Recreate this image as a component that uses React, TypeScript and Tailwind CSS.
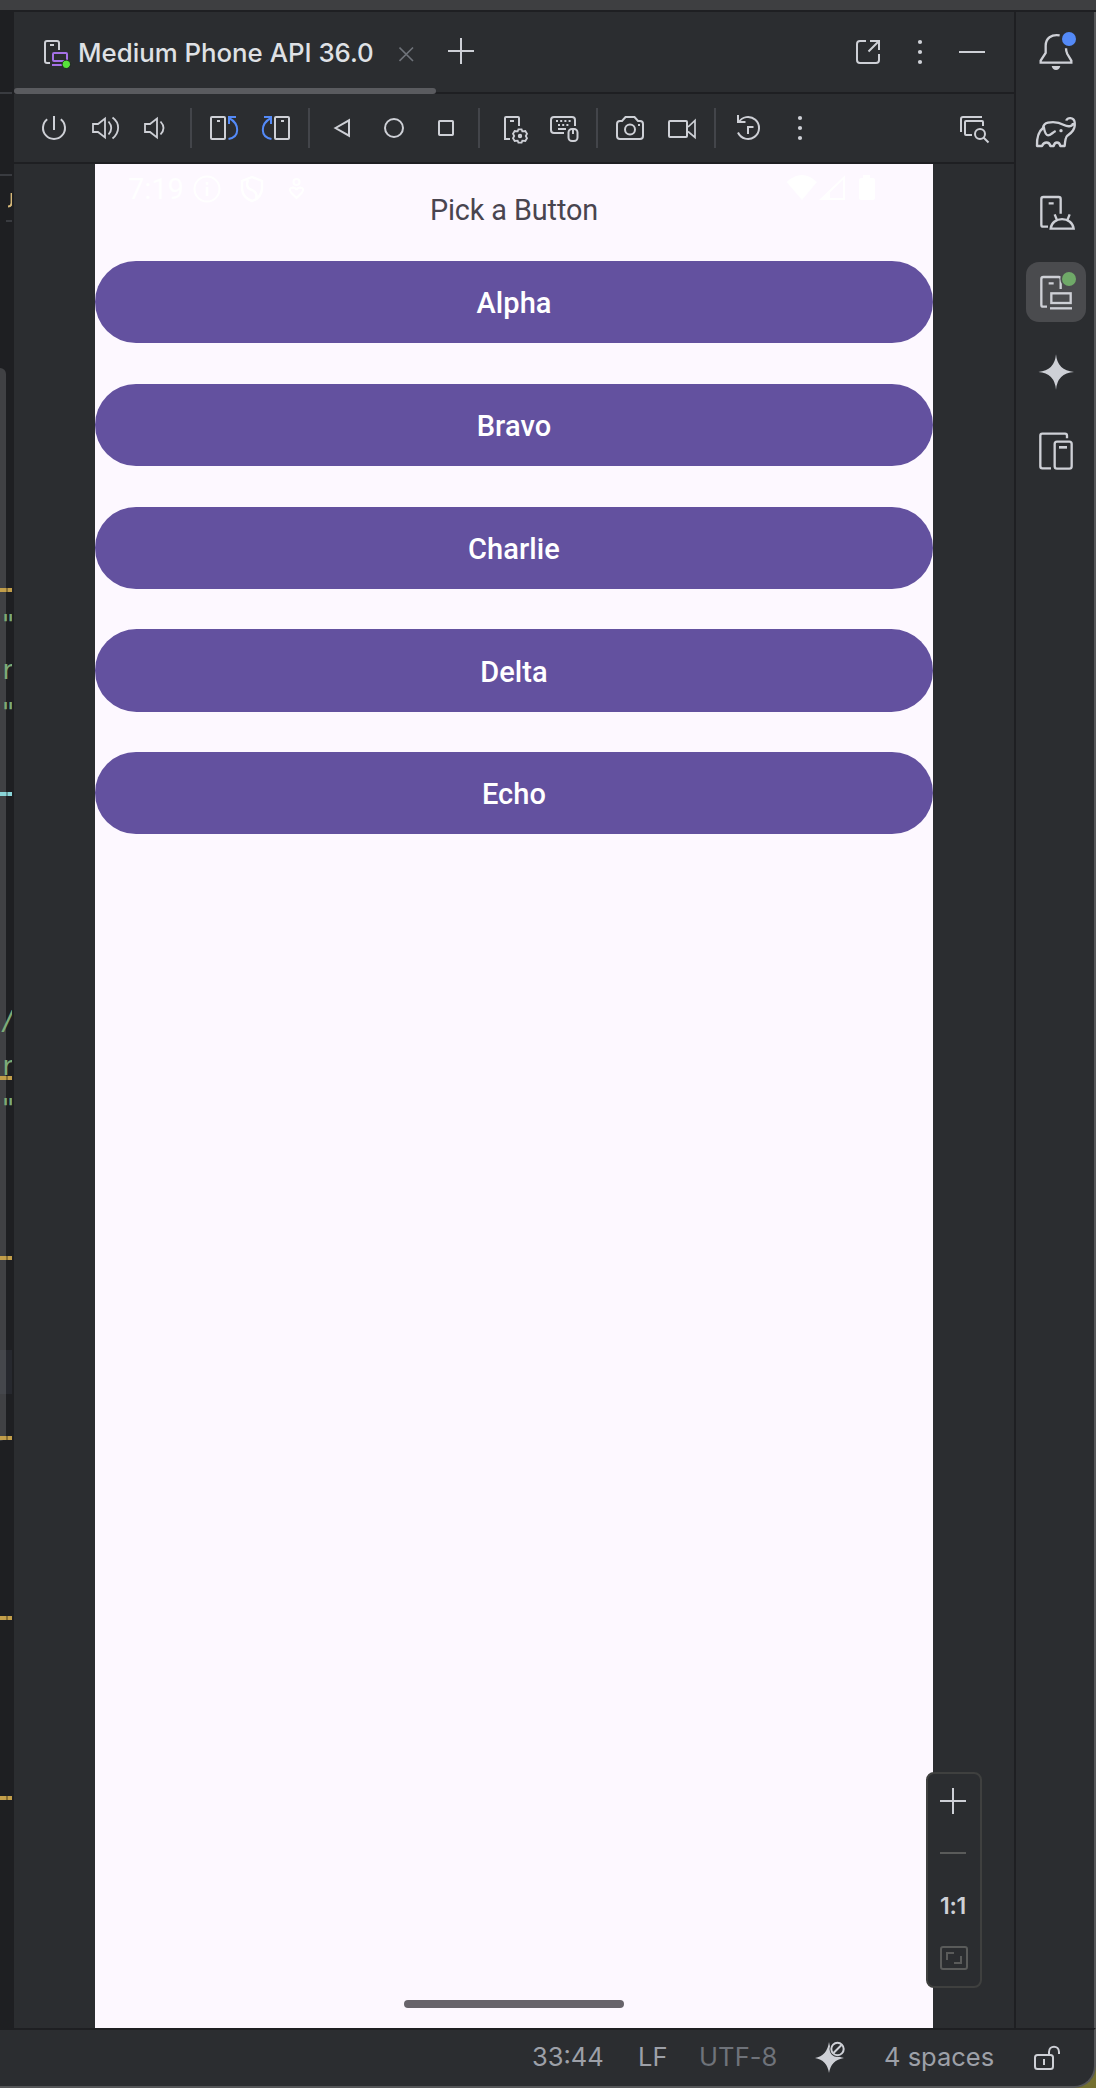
import type { ReactNode } from "react";

type ArtProps = { w: number; h: number; box: string; sw?: number; children: ReactNode };

/* Line-art cell: strokes by default, filled parts opt in individually. */
function Art({ w, h, box, sw = 2, children }: ArtProps) {
  return (
    <svg
      width={w}
      height={h}
      viewBox={box}
      fill="none"
      stroke="currentColor"
      strokeWidth={sw}
      className="block shrink-0"
      aria-hidden="true"
    >
      {children}
    </svg>
  );
}

function Dots({ x, y }: { x: number; y: number }) {
  return (
    <g fill="currentColor" stroke="none">
      <circle cx={x} cy={y - 10} r="2.1" />
      <circle cx={x} cy={y} r="2.1" />
      <circle cx={x} cy={y + 10} r="2.1" />
    </g>
  );
}

const Separator = () => <div className="h-10 w-0.5 shrink-0 bg-[#43454a]" />;

const warn = "bg-[#c29e4a]";
const marks = [
  { top: 576, tone: warn },
  { top: 780, tone: "bg-[#8ad5d8]" },
  { top: 1064, tone: warn },
  { top: 1244, tone: warn },
  { top: 1424, tone: warn },
  { top: 1604, tone: warn },
  { top: 1784, tone: warn },
];
const glyphs = [
  { top: 597, text: '"' },
  { top: 642, text: "r" },
  { top: 685, text: '"' },
  { top: 993, text: "/" },
  { top: 1038, text: "r" },
  { top: 1081, text: '"' },
];

function EditorEdge() {
  return (
    <div className="relative w-3.5 shrink-0 bg-[#1e1f22]">
      <div className="absolute inset-y-0 left-0 w-3 overflow-hidden">
        <div className="absolute top-20 h-0.5 w-full bg-[#393b40]" />
        <div className="absolute top-[162px] h-0.5 w-full bg-[#393b40]" />
        <div className="absolute top-[208px] left-1.5 h-0.5 w-full bg-[#393b40]" />
        <svg className="absolute top-[180px] left-2" width="4" height="18" fill="none" stroke="#d5b778" strokeWidth="2">
          <path d="M3.6 1V11Q3.4 14.5 0 14.5" />
        </svg>
        <div className="absolute top-[356px] left-0 h-[1073px] w-1.5 rounded-tr-md rounded-br-md bg-[#404144]" />
        <div className="absolute top-[1338px] left-0 h-11 w-full bg-[#26282e]" />
        <div className="absolute top-[1338px] left-0 h-11 w-1.5 bg-[#45474c]" />
        {glyphs.map((g) => (
          <span
            key={g.top}
            className="absolute left-0 font-['DejaVu_Sans_Mono'] text-[27px] leading-8 text-[#7cab79]"
            style={{ top: g.top }}
          >
            {g.text}
          </span>
        ))}
        {marks.map((m) => (
          <div key={m.top} className={`absolute left-0 h-1 w-full ${m.tone}`} style={{ top: m.top }}>
            <div className="ml-1.5 h-full w-0.5 bg-black/30" />
          </div>
        ))}
      </div>
    </div>
  );
}

function TabHeader() {
  return (
    <div className="relative flex h-[82px] shrink-0 items-start border-b-2 border-[#1e1f22]">
      <Art w={64} h={80} box="14 12 64 80">
        <path d="M50 63H47Q45 63 45 61V43Q45 41 47 41H57Q59 41 59 43V50M50 45H54" />
        <g stroke="#a571e6">
          <rect x="53" y="53" width="14" height="8" rx="1" />
          <path d="M52 65H64" />
        </g>
        <circle cx="66.3" cy="64.3" r="4.2" fill="#57e33a" stroke="#1e1f22" strokeWidth="1" />
      </Art>
      <div className="w-[321px] pt-[25px] font-[Inter] text-[25.8px] leading-8 font-medium whitespace-nowrap text-[#dfe1e5]">
        Medium Phone API 36.0
      </div>
      <Art w={85} h={80} box="399 12 85 80">
        <path stroke="#6f737a" strokeWidth="1.6" d="M399.5 47.5L413 61M413 47.5L399.5 61" />
        <path d="M448 51H474M461 38V64" />
      </Art>
      <div className="grow" />
      <Art w={176} h={80} box="838 12 176 80">
        <path d="M866 41H860Q857 41 857 44V60Q857 63 860 63H876Q879 63 879 60V54M870 41H879V50M879 41L868.5 51.5" />
        <Dots x={920} y={52} />
        <path d="M959 52H985" />
      </Art>
      <div className="absolute bottom-[-2px] left-0 h-1.5 w-[422px] rounded-full bg-[#5a5b5f]" />
    </div>
  );
}

function Toolbar() {
  return (
    <div className="flex h-[70px] shrink-0 items-center border-b-2 border-[#1e1f22]">
      <Art w={66} h={68} box="14 94 66 68">
        <path d="M47.2 119.3A11 11 0 1 0 60.8 119.3M54 116V130" />
      </Art>
      <Art w={50} h={68} box="80 94 50 68">
        <path strokeWidth="1.8" d="M93 124H98L105 118.6V137.4L98 132H93ZM108.5 121.5Q114 128 108.5 134.5M112.5 117.5C120 123 120 132 112.5 138.5" />
      </Art>
      <Art w={60} h={68} box="130 94 60 68">
        <path strokeWidth="1.8" d="M145 124H150L157 118.6V137.4L150 132H145ZM160.5 121.5Q166.5 128 160.5 134.5" />
      </Art>
      <Separator />
      <Art w={58} h={68} box="192 94 58 68">
        <rect x="211" y="117" width="14" height="22" rx="1" />
        <path d="M217 121H220" />
        <path stroke="#548af7" d="M236 117H229V124M229 118C240 124 240 137 228.5 139" />
      </Art>
      <Art w={58} h={68} box="250 94 58 68">
        <rect x="275" y="117" width="14" height="22" rx="1" />
        <path d="M281 121H284" />
        <path stroke="#548af7" d="M264 117H271V124M271 118C260 124 260 137 271.5 139" />
      </Art>
      <Separator />
      <Art w={168} h={68} box="310 94 168 68">
        <path d="M335.5 128L349 120.3V135.7Z" />
        <circle cx="394" cy="128" r="9" />
        <rect x="439" y="121" width="14" height="14" rx="0.7" />
      </Art>
      <Separator />
      <Art w={60} h={68} box="480 94 60 68">
        <path d="M510 139H505V118Q505 117 506 117H518Q519 117 519 118V126M510 121H514" />
        <path strokeWidth="1.8" d="M518.4 129.3H521.6L522.3 131.3L525.3 131L527 133.8L525.8 136L527 138.2L525.3 141L522.3 140.7L521.6 142.7H518.4L517.7 140.7L514.7 141L513 138.2L514.2 136L513 133.8L514.7 131L517.7 131.3Z" />
        <circle cx="520" cy="136" r="1.2" />
      </Art>
      <Art w={56} h={68} box="540 94 56 68">
        <path d="M564 133H554Q551 133 551 130V120Q551 117 554 117H572Q575 117 575 120V126M558 129H566" />
        <path strokeDasharray="2 2.2" d="M556 121H571M558 125H569" />
        <rect x="568.500" y="129" width="9" height="12" rx="3.5" />
        <path d="M573 129V134" />
      </Art>
      <Separator />
      <Art w={116} h={68} box="598 94 116 68">
        <path d="M620 121H622L625.5 117H634.5L638 121H640Q643 121 643 124V136Q643 139 640 139H620Q617 139 617 136V124Q617 121 620 121" />
        <circle cx="630" cy="129.5" r="5" />
        <path d="M638 125H640" />
        <rect x="669" y="121" width="18" height="16" rx="1" />
        <path strokeWidth="1.7" d="M688 127L695 120.5V137.5L688 131.5" />
      </Art>
      <Separator />
      <Art w={144} h={68} box="716 94 144 68">
        <path d="M738.5 122.5A11 11 0 1 1 738 132.5M738 115V122H745.5M748 134V127H753.5" />
        <Dots x={800} y={128} />
      </Art>
      <div className="grow" />
      <Art w={70} h={68} box="944 94 70 68">
        <path d="M961 132V119Q961 117 963 117H982M972 135H966Q965 135 965 134V122Q965 121 966 121H982Q983 121 983 122V126" />
        <circle cx="980" cy="134" r="5" />
        <path d="M983.5 137.5L988.5 142.5" />
      </Art>
    </div>
  );
}

function Phone() {
  return (
    <div className="flex w-[838px] shrink-0 flex-col items-center bg-[#fdf8ff] font-[Roboto]">
      <div className="relative h-[97px] w-full shrink-0">
        <div className="absolute inset-x-0 top-0 flex h-[50px] justify-between text-white">
          <div className="flex pl-[33px]">
            <span className="w-[63px] pt-[9px] text-[29px] leading-8">7:19</span>
            <Art w={130} h={50} box="191 164 130 50">
              <circle cx="207" cy="189" r="12.5" />
              <path strokeWidth="2.6" d="M207 187V196M207 182V184.8" />
              <path strokeWidth="2.4" d="M252 177L262 181V189Q261 198 252 201Q243 198 242 189V181ZM248 180Q245 188 252 190Q258 193 256 199" />
              <circle cx="296.500" cy="182" r="3" />
              <path d="M296.500 198L291 192.500Q288 188 293 187.500Q296 188 296.500 190Q297 188 300 187.500Q305 188 302 192.500Z" />
            </Art>
          </div>
          <Art w={153} h={50} box="780 164 153 50">
            <path fill="currentColor" stroke="none" d="M786.500 182Q802 168 817 182L802 200ZM859 180Q859 178 861 178H863V175H870V178H873Q875 178 875 180V198Q875 200 873 200H861Q859 200 859 198Z" />
            <path d="M821.500 199H844V177.500Z" />
            <path fill="currentColor" stroke="none" d="M820 200H830V191Z" />
          </Art>
        </div>
        <div className="relative pt-[28px] text-center text-[28.8px] leading-9 tracking-[-0.1px] text-[#49454f]">
          Pick a Button
        </div>
      </div>
      <div className="flex w-full flex-col gap-[40.5px]">
        {["Alpha", "Bravo", "Charlie", "Delta", "Echo"].map((name) => (
          <button
            key={name}
            className="flex h-[82.3px] w-full items-center justify-center rounded-full bg-[#63519f] pt-0.5 text-[29px] leading-9 font-medium tracking-[0.1px] text-white"
          >
            {name}
          </button>
        ))}
      </div>
      <div className="mt-auto mb-5 h-2 w-[220px] rounded-full bg-[#68646b]" />
    </div>
  );
}

function ZoomPanel() {
  return (
    <div className="absolute bottom-10 left-[912px] flex h-[216px] w-14 flex-col items-center rounded-lg border-2 border-[#3f403f] bg-[#2b2d30] text-[#ced0d6]">
      <Art w={52} h={108} box="928 1774 52 108">
        <path d="M940 1801H966M953 1788V1814" />
        <path stroke="#5a5b5a" d="M940 1853H966" />
      </Art>
      <div className="h-[52px] pt-[8px] pr-[2px] font-[Inter] text-[23px] leading-8 font-semibold tracking-[-0.2px]">1:1</div>
      <Art w={52} h={52} box="928 1934 52 52">
        <path
          stroke="#5a5b5a"
          d="M943 1947H965Q967 1947 967 1949V1967Q967 1969 965 1969H943Q941 1969 941 1967V1949Q941 1947 943 1947ZM947 1960V1953H954M961 1956V1963H954"
        />
      </Art>
    </div>
  );
}

function ToolStripe() {
  return (
    <div className="flex w-20 shrink-0 flex-col border-l-2 border-[#1e1f22] text-[#ced0d6]">
      <Art w={78} h={80} box="60 36 234 240" sw={7}>
        <path d="M191 106C166 102 149 115 149 137V159L134 182V188H226V182L214 162Q210 154 210 145" />
        <path fill="currentColor" stroke="none" d="M167 198H193Q190 210 180 210Q170 210 167 198Z" />
        <circle cx="219" cy="117" r="21" fill="#548af7" stroke="none" />
      </Art>
      <Art w={78} h={80} box="60 276 234 240" sw={7}>
        <path
          strokeLinejoin="round"
          d="M211 362C212 352 234 350 236 367C239 391 223 400 214 407Q208 412 206 438H193C190 424 176 424 173 438H163C160 424 144 424 138 438H123C122 412 127 395 141 384C142 374 147 370 156 368C180 363 193 369 204 375C217 382 231 379 231 369"
        />
        <path d="M143 379C146 397 149 406 156 406C164 406 169 398 179 393" />
        <circle cx="195" cy="392" r="5" fill="currentColor" stroke="none" />
      </Art>
      <Art w={78} h={80} box="60 516 234 240" sw={7}>
        <path d="M156 680H142Q136 680 136 674V597Q136 591 142 591H188Q194 591 194 597V641M158 610H173" />
        <path d="M164 686C168 648 228 648 233 686ZM176 643L182 658M221 643L215 658" />
      </Art>
      <div className="flex h-20 items-center pl-2.5">
        <div className="flex size-[60px] items-center justify-center rounded-[13px] bg-[#4a4b4e]">
          <Art w={60} h={60} box="90 66 180 180" sw={7}>
            <path d="M153 200H142Q136 200 136 194V117Q136 111 142 111H188Q194 111 194 117V147M158 130H173" />
            <rect x="166" y="160" width="58" height="29" />
            <path d="M162 205H228" />
            <circle cx="219" cy="117" r="26" fill="#4a4b4e" stroke="none" />
            <circle cx="219" cy="117" r="21" fill="#6fa968" stroke="none" />
          </Art>
        </div>
      </div>
      <Art w={78} h={80} box="60 276 234 240" sw={7}>
        <path fill="currentColor" stroke="none" d="M180 343Q184 392 234 396Q184 400 180 449Q176 400 127 396Q176 392 180 343Z" />
        <path fill="currentColor" stroke="none" d="M180 360Q188 388 212 396Q188 404 180 431Q172 404 148 396Q172 388 180 360Z" />
      </Art>
      <Art w={78} h={80} box="60 516 234 240" sw={7}>
        <path d="M165 685H139Q133 685 133 679V587Q133 581 139 581H207Q213 581 213 587V595" />
        <rect x="176" y="605" width="51" height="81" rx="7" />
        <path strokeWidth="8" d="M189 622H213" />
      </Art>
    </div>
  );
}

function StatusBar() {
  return (
    <div className="relative h-[60px] shrink-0 overflow-hidden bg-[#74702f]">
      <div className="flex h-full items-start rounded-br-[22px] border-t-2 border-r-2 border-b-2 border-t-[#1e1f22] border-r-[#555658] border-b-[#555658] bg-[#2b2d30] pt-[11px] pl-[532px] font-[Inter] text-[25.500px] leading-8 whitespace-nowrap text-[#9da0a8]">
        <span className="w-[106px]">33:44</span>
        <span className="w-[61px]">LF</span>
        <span className="w-[111px] tracking-[0.1px] text-[#6f737a]">UTF-8</span>
        <Art w={74} h={32} box="810 2041 74 32">
          <path fill="#ced0d6" stroke="none" d="M829 2042Q831 2056 844 2058Q831 2060 829 2073Q827 2060 815 2058Q827 2056 829 2042Z" />
          <path fill="#ced0d6" stroke="none" d="M829 2047Q832 2054 839 2058Q832 2062 829 2069Q826 2062 820 2058Q826 2054 829 2047Z" />
          <circle cx="837.500" cy="2049" r="8" fill="#2b2d30" stroke="none" />
          <circle cx="837.500" cy="2049" r="6.200" stroke="#ced0d6" />
          <path stroke="#ced0d6" d="M833.500 2053L841.500 2045" />
        </Art>
        <span className="w-[146px]">4 spaces</span>
        <Art w={40} h={32} box="1030 2041 40 32">
          <g stroke="#ced0d6">
            <rect x="1035" y="2055" width="18" height="14" rx="2.500" />
            <path d="M1049 2055V2052C1049 2045 1059 2045 1059 2052V2054M1044 2059V2065" />
          </g>
        </Art>
      </div>
    </div>
  );
}

export default function App() {
  return (
    <div className="flex h-[2088px] w-[1096px] flex-col overflow-hidden bg-[#2b2d30] text-[#ced0d6]">
      <div className="h-3 shrink-0 border-b-2 border-[#1e1f22] bg-[#3e3f41]" />
      <div className="flex min-h-0 grow">
        <EditorEdge />
        <div className="relative flex w-[1000px] shrink-0 flex-col">
          <TabHeader />
          <Toolbar />
          <div className="flex min-h-0 grow pl-[81px]">
            <Phone />
          </div>
          <ZoomPanel />
        </div>
        <ToolStripe />
        <div className="w-0.5 shrink-0 bg-[#555658]" />
      </div>
      <StatusBar />
    </div>
  );
}
